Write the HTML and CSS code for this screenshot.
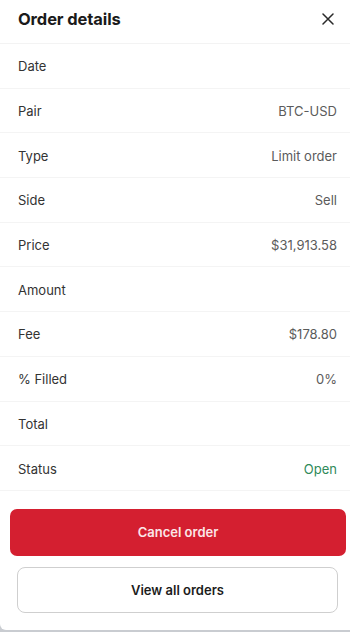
FILE: index.html
```html
<!DOCTYPE html>
<html>
<head>
<meta charset="utf-8">
<link rel="stylesheet" href="styles.css">
</head>
<body>
<div class="sheet">
  <header class="head">
    <h1 class="title">Order details</h1>
    <button class="close" aria-label="Close">
      <svg width="12" height="12" viewBox="0 0 12 12"><path d="M1 1L11 11M11 1L1 11" stroke="#2a2a2a" stroke-width="1.5" stroke-linecap="round"/></svg>
    </button>
  </header>
  <div class="rows">
    <div class="row"><span class="label">Date</span><span class="value"></span></div>
    <div class="row"><span class="label">Pair</span><span class="value">BTC-USD</span></div>
    <div class="row"><span class="label">Type</span><span class="value">Limit order</span></div>
    <div class="row"><span class="label">Side</span><span class="value">Sell</span></div>
    <div class="row"><span class="label">Price</span><span class="value">$31,913.58</span></div>
    <div class="row"><span class="label">Amount</span><span class="value"></span></div>
    <div class="row"><span class="label">Fee</span><span class="value">$178.80</span></div>
    <div class="row"><span class="label">% Filled</span><span class="value">0%</span></div>
    <div class="row"><span class="label">Total</span><span class="value"></span></div>
    <div class="row"><span class="label">Status</span><span class="value open">Open</span></div>
  </div>
  <div class="actions">
    <button class="btn cancel">Cancel order</button>
    <button class="btn view">View all orders</button>
  </div>
</div>
</body>
</html>
```
FILE: styles.css
```css
html, body {
  margin: 0;
  padding: 0;
}
body {
  width: 350px;
  height: 632px;
  background: #c9ccd1;
  font-family: Inter, "Noto Sans", sans-serif;
  overflow: hidden;
}
.sheet {
  height: 630px;
  background: #ffffff;
  border-bottom-left-radius: 6px;
  display: flex;
  flex-direction: column;
}
.head {
  height: 44px;
  box-sizing: border-box;
  border-bottom: 1px solid #f3f3f3;
  display: flex;
  align-items: center;
  justify-content: space-between;
  padding: 0 16px 6px 18px;
}
.title {
  margin: 0;
  font-size: 16.5px;
  font-weight: 700;
  color: #1a1a1a;
  letter-spacing: -0.1px;
}
.close {
  border: 0;
  background: none;
  padding: 0;
  width: 12px;
  height: 12px;
  display: flex;
}
.rows {
  display: flex;
  flex-direction: column;
}
.row {
  height: 44.7px;
  box-sizing: border-box;
  border-bottom: 1px solid #f4f4f4;
  display: flex;
  align-items: center;
  justify-content: space-between;
  padding: 1px 13px 0 18px;
  font-size: 13px;
}
.label {
  color: #333333;
}
.value {
  color: #5b5b5b;
}
.value.open {
  color: #2f8a5a;
}
.actions {
  display: flex;
  flex-direction: column;
  align-items: flex-start;
  gap: 11px;
  padding-top: 18px;
}
.btn {
  font-family: Inter, "Noto Sans", sans-serif;
  font-size: 13px;
  font-weight: 600;
  box-sizing: border-box;
  cursor: pointer;
}
.cancel {
  width: 336px;
  height: 47px;
  margin-left: 10px;
  background: #d41f30;
  color: #fbe6e8;
  border: 0;
  border-radius: 7px;
}
.view {
  width: 321px;
  height: 46px;
  margin-left: 17px;
  background: #ffffff;
  color: #1c1c1c;
  border: 1px solid #cfcfcf;
  border-radius: 8px;
}
```
